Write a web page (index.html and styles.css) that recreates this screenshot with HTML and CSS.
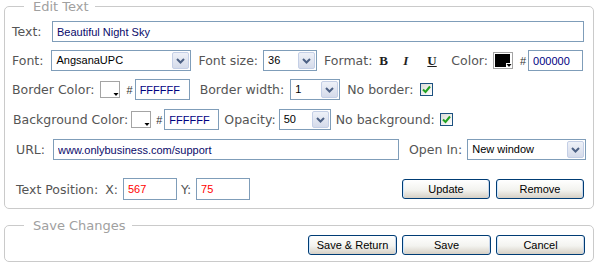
FILE: index.html
```html
<!DOCTYPE html>
<html>
<head>
  <meta charset="UTF-8">
  <title>Edit Text</title>
  <link rel="stylesheet" href="styles.css">
</head>
<body>
  <div class="page">
    <fieldset class="group edit-group">
      <legend>Edit Text</legend>

      <div class="row row-text">
        <div class="pair wide">
          <span class="lbl">Text:</span>
        </div>
        <input type="text" class="field field-text" value="Beautiful Night Sky">
      </div>

      <div class="row row-font">
        <div class="pair wide">
          <span class="lbl">Font:</span>
          <div class="select sel-font">
            <span class="val">AngsanaUPC</span>
            <span class="arrow"><svg width="13" height="15" viewBox="0 0 13 15"><path d="M3 6 L6.5 9.5 L10 6" fill="none" stroke="#4d6185" stroke-width="2"/></svg></span>
          </div>
        </div>
        <div class="pair">
          <span class="lbl">Font size:</span>
          <div class="select sel-size">
            <span class="val">36</span>
            <span class="arrow"><svg width="13" height="15" viewBox="0 0 13 15"><path d="M3 6 L6.5 9.5 L10 6" fill="none" stroke="#4d6185" stroke-width="2"/></svg></span>
          </div>
        </div>
        <div class="pair format">
          <span class="lbl">Format:</span>
          <span class="fmt fmt-b">B</span>
          <span class="fmt fmt-i">I</span>
          <span class="fmt fmt-u">U</span>
        </div>
        <div class="pair">
          <span class="lbl">Color:</span>
          <svg class="swatch black" width="20" height="17" viewBox="0 0 20 17">
            <rect x="0.5" y="0.5" width="19" height="16" fill="#fff" stroke="#a4a4a4"/>
            <rect class="fill" x="2" y="2" width="15" height="13"/>
            <rect x="13" y="11" width="6" height="5" fill="#fff"/>
            <path d="M13.5 12 h5 l-2.5 3 z" fill="#000"/>
          </svg>
        </div>
        <div class="hex">
          <span class="hash">#</span>
          <input type="text" class="field field-hex" value="000000">
        </div>
      </div>

      <div class="row row-border">
        <div class="pair">
          <span class="lbl">Border Color:</span>
          <svg class="swatch white" width="20" height="17" viewBox="0 0 20 17">
            <rect x="0.5" y="0.5" width="19" height="16" fill="#fff" stroke="#a4a4a4"/>
            <rect class="fill" x="2" y="2" width="15" height="13"/>
            <rect x="13" y="11" width="6" height="5" fill="#fff"/>
            <path d="M13.5 12 h5 l-2.5 3 z" fill="#000"/>
          </svg>
        </div>
        <div class="hex">
          <span class="hash">#</span>
          <input type="text" class="field field-hex" value="FFFFFF">
        </div>
        <div class="pair gap-l">
          <span class="lbl">Border width:</span>
          <div class="select sel-width">
            <span class="val">1</span>
            <span class="arrow"><svg width="13" height="15" viewBox="0 0 13 15"><path d="M3 6 L6.5 9.5 L10 6" fill="none" stroke="#4d6185" stroke-width="2"/></svg></span>
          </div>
        </div>
        <div class="pair">
          <span class="lbl">No border:</span>
          <span class="check"><svg width="11" height="11" viewBox="0 0 11 11"><path d="M2 5.5 L4.5 8 L9 2.5" fill="none" stroke="#21a121" stroke-width="2"/></svg></span>
        </div>
      </div>

      <div class="row row-bg">
        <div class="pair">
          <span class="lbl">Background Color:</span>
          <svg class="swatch white" width="20" height="17" viewBox="0 0 20 17">
            <rect x="0.5" y="0.5" width="19" height="16" fill="#fff" stroke="#a4a4a4"/>
            <rect class="fill" x="2" y="2" width="15" height="13"/>
            <rect x="13" y="11" width="6" height="5" fill="#fff"/>
            <path d="M13.5 12 h5 l-2.5 3 z" fill="#000"/>
          </svg>
        </div>
        <div class="hex">
          <span class="hash">#</span>
          <input type="text" class="field field-hex" value="FFFFFF">
        </div>
        <div class="pair">
          <span class="lbl">Opacity:</span>
          <div class="select sel-opacity">
            <span class="val">50</span>
            <span class="arrow"><svg width="13" height="15" viewBox="0 0 13 15"><path d="M3 6 L6.5 9.5 L10 6" fill="none" stroke="#4d6185" stroke-width="2"/></svg></span>
          </div>
        </div>
        <div class="pair">
          <span class="lbl">No background:</span>
          <span class="check"><svg width="11" height="11" viewBox="0 0 11 11"><path d="M2 5.5 L4.5 8 L9 2.5" fill="none" stroke="#21a121" stroke-width="2"/></svg></span>
        </div>
      </div>

      <div class="row row-url">
        <div class="pair wide">
          <span class="lbl">URL:</span>
          <input type="text" class="field field-url" value="www.onlybusiness.com/support">
        </div>
        <div class="pair">
          <span class="lbl">Open In:</span>
          <div class="select sel-open">
            <span class="val">New window</span>
            <span class="arrow"><svg width="13" height="15" viewBox="0 0 13 15"><path d="M3 6 L6.5 9.5 L10 6" fill="none" stroke="#4d6185" stroke-width="2"/></svg></span>
          </div>
        </div>
      </div>

      <div class="row row-pos">
        <span class="lbl">Text Position:</span>
        <div class="pair pos-x">
          <span class="lbl">X:</span>
          <input type="text" class="field field-pos" value="567">
        </div>
        <div class="pair">
          <span class="lbl">Y:</span>
          <input type="text" class="field field-pos" value="75">
        </div>
        <div class="buttons">
          <button class="btn">Update</button>
          <button class="btn">Remove</button>
        </div>
      </div>
    </fieldset>

    <fieldset class="group save-group">
      <legend>Save Changes</legend>
      <div class="buttons">
        <button class="btn">Save &amp; Return</button>
        <button class="btn">Save</button>
        <button class="btn">Cancel</button>
      </div>
    </fieldset>
  </div>
</body>
</html>
```

FILE: styles.css
```css
* {
  box-sizing: border-box;
}

body {
  margin: 0;
  background: #fff;
  font-family: 'DejaVu Sans', Tahoma, sans-serif;
  font-size: 12.5px;
  color: #555;
}

.page {
  padding: 0 4px;
}

.group {
  margin: 0;
  border: 1px solid #cacaca;
  border-radius: 5px;
  min-width: 0;
}

.group legend {
  margin-left: 12px;
  padding: 0 6px 0 9px;
  font-size: 13px;
  line-height: 13px;
  color: #a0a0a0;
}

.edit-group {
  padding: 8px 9px 8px 7px;
}

.save-group {
  margin-top: 10px;
  padding: 3px 8px 6px 7px;
}

/* rows */
.row {
  display: flex;
  align-items: center;
  gap: 7px;
  height: 21px;
}

.row-text { gap: 8px; }
.row-font { margin-top: 8px; }
.row-border { margin-top: 8px; }
.row-bg { margin-top: 9px; padding-left: 1px; gap: 5px; }
.row-url { margin-top: 9px; padding-left: 4px; gap: 10px; }
.row-pos { margin-top: 18px; height: 22px; padding-left: 4px; gap: 4px; }

.pair {
  display: flex;
  align-items: center;
  gap: 5px;
}

.row-bg .pair {
  gap: 3px;
}

.pair.wide {
  gap: 8px;
}

.row-text .pair.wide {
  width: 32px;
}

.gap-l {
  margin-left: 3px;
  gap: 6px;
}

.pos-x {
  margin-left: 3px;
}

.hex {
  display: flex;
  align-items: center;
  gap: 2px;
}

.hash {
  font-family: 'Liberation Sans', Arial, sans-serif;
  font-size: 11px;
  color: #333;
}

.lbl {
  white-space: nowrap;
}

/* inputs */
.field {
  height: 21px;
  margin: 0;
  padding: 0 4px;
  border: 1px solid #7f9db9;
  background: #fff;
  font-family: 'Liberation Sans', Arial, sans-serif;
  font-size: 11px;
  color: #0a0a6a;
  outline: none;
}

.field-text { flex: 1; }
.field-hex { width: 55px; color: #00007f; }
.field-url { width: 346px; }
.field-pos { width: 54px; height: 22px; color: #f00; }

/* select boxes */
.select {
  display: flex;
  height: 21px;
  border: 1px solid #7f9db9;
  background: #fff;
}

.select .val {
  flex: 1;
  padding-left: 4px;
  font-family: 'Liberation Sans', Arial, sans-serif;
  font-size: 11px;
  line-height: 19px;
  color: #000;
}

.select .arrow {
  display: flex;
  align-items: center;
  justify-content: center;
  width: 17px;
  margin: 1px;
  border: 1px solid #c4cfe6;
  border-radius: 2px;
  background: linear-gradient(180deg, #eef1f8 0%, #d5dbea 100%);
}

.sel-font { width: 140px; }
.sel-size { width: 54px; }
.sel-width { width: 50px; }
.sel-opacity { width: 52px; }
.sel-open { width: 119px; }

/* format buttons */
.format {
  gap: 14px;
  margin-right: 7px;
}

.format .lbl {
  margin-right: -7px;
}

.fmt {
  width: 10px;
  font-family: 'Liberation Serif', 'Times New Roman', serif;
  font-size: 13px;
  font-weight: bold;
  color: #1e1e1e;
}

.fmt-i { font-style: italic; }
.fmt-u { text-decoration: underline; }

/* colour swatches */
.swatch {
  display: block;
}

.swatch.black .fill { fill: #000; }
.swatch.white .fill { fill: #fff; }

/* checkbox */
.check {
  display: flex;
  align-items: center;
  justify-content: center;
  width: 13px;
  height: 13px;
  margin-left: 2px;
  border: 1px solid #1c5180;
  background: linear-gradient(135deg, #dcdcd7 0%, #fff 100%);
}

/* buttons */
.buttons {
  display: flex;
  justify-content: flex-end;
  gap: 6px;
  margin-left: auto;
}

.btn {
  width: 88px;
  height: 20px;
  margin: 0;
  padding: 0;
  border: 1px solid #003c74;
  border-radius: 3px;
  background: linear-gradient(180deg, #ffffff 0%, #f3f3ef 55%, #d6d0c5 100%);
  box-shadow: inset 1px 0 0 #cee7ff, inset -1px 0 0 #c8d6ea;
  font-family: 'Liberation Sans', Arial, sans-serif;
  font-size: 11px;
  color: #000;
}

.save-group .buttons {
  gap: 5px;
}

.save-group .btn {
  width: 89px;
}
```
